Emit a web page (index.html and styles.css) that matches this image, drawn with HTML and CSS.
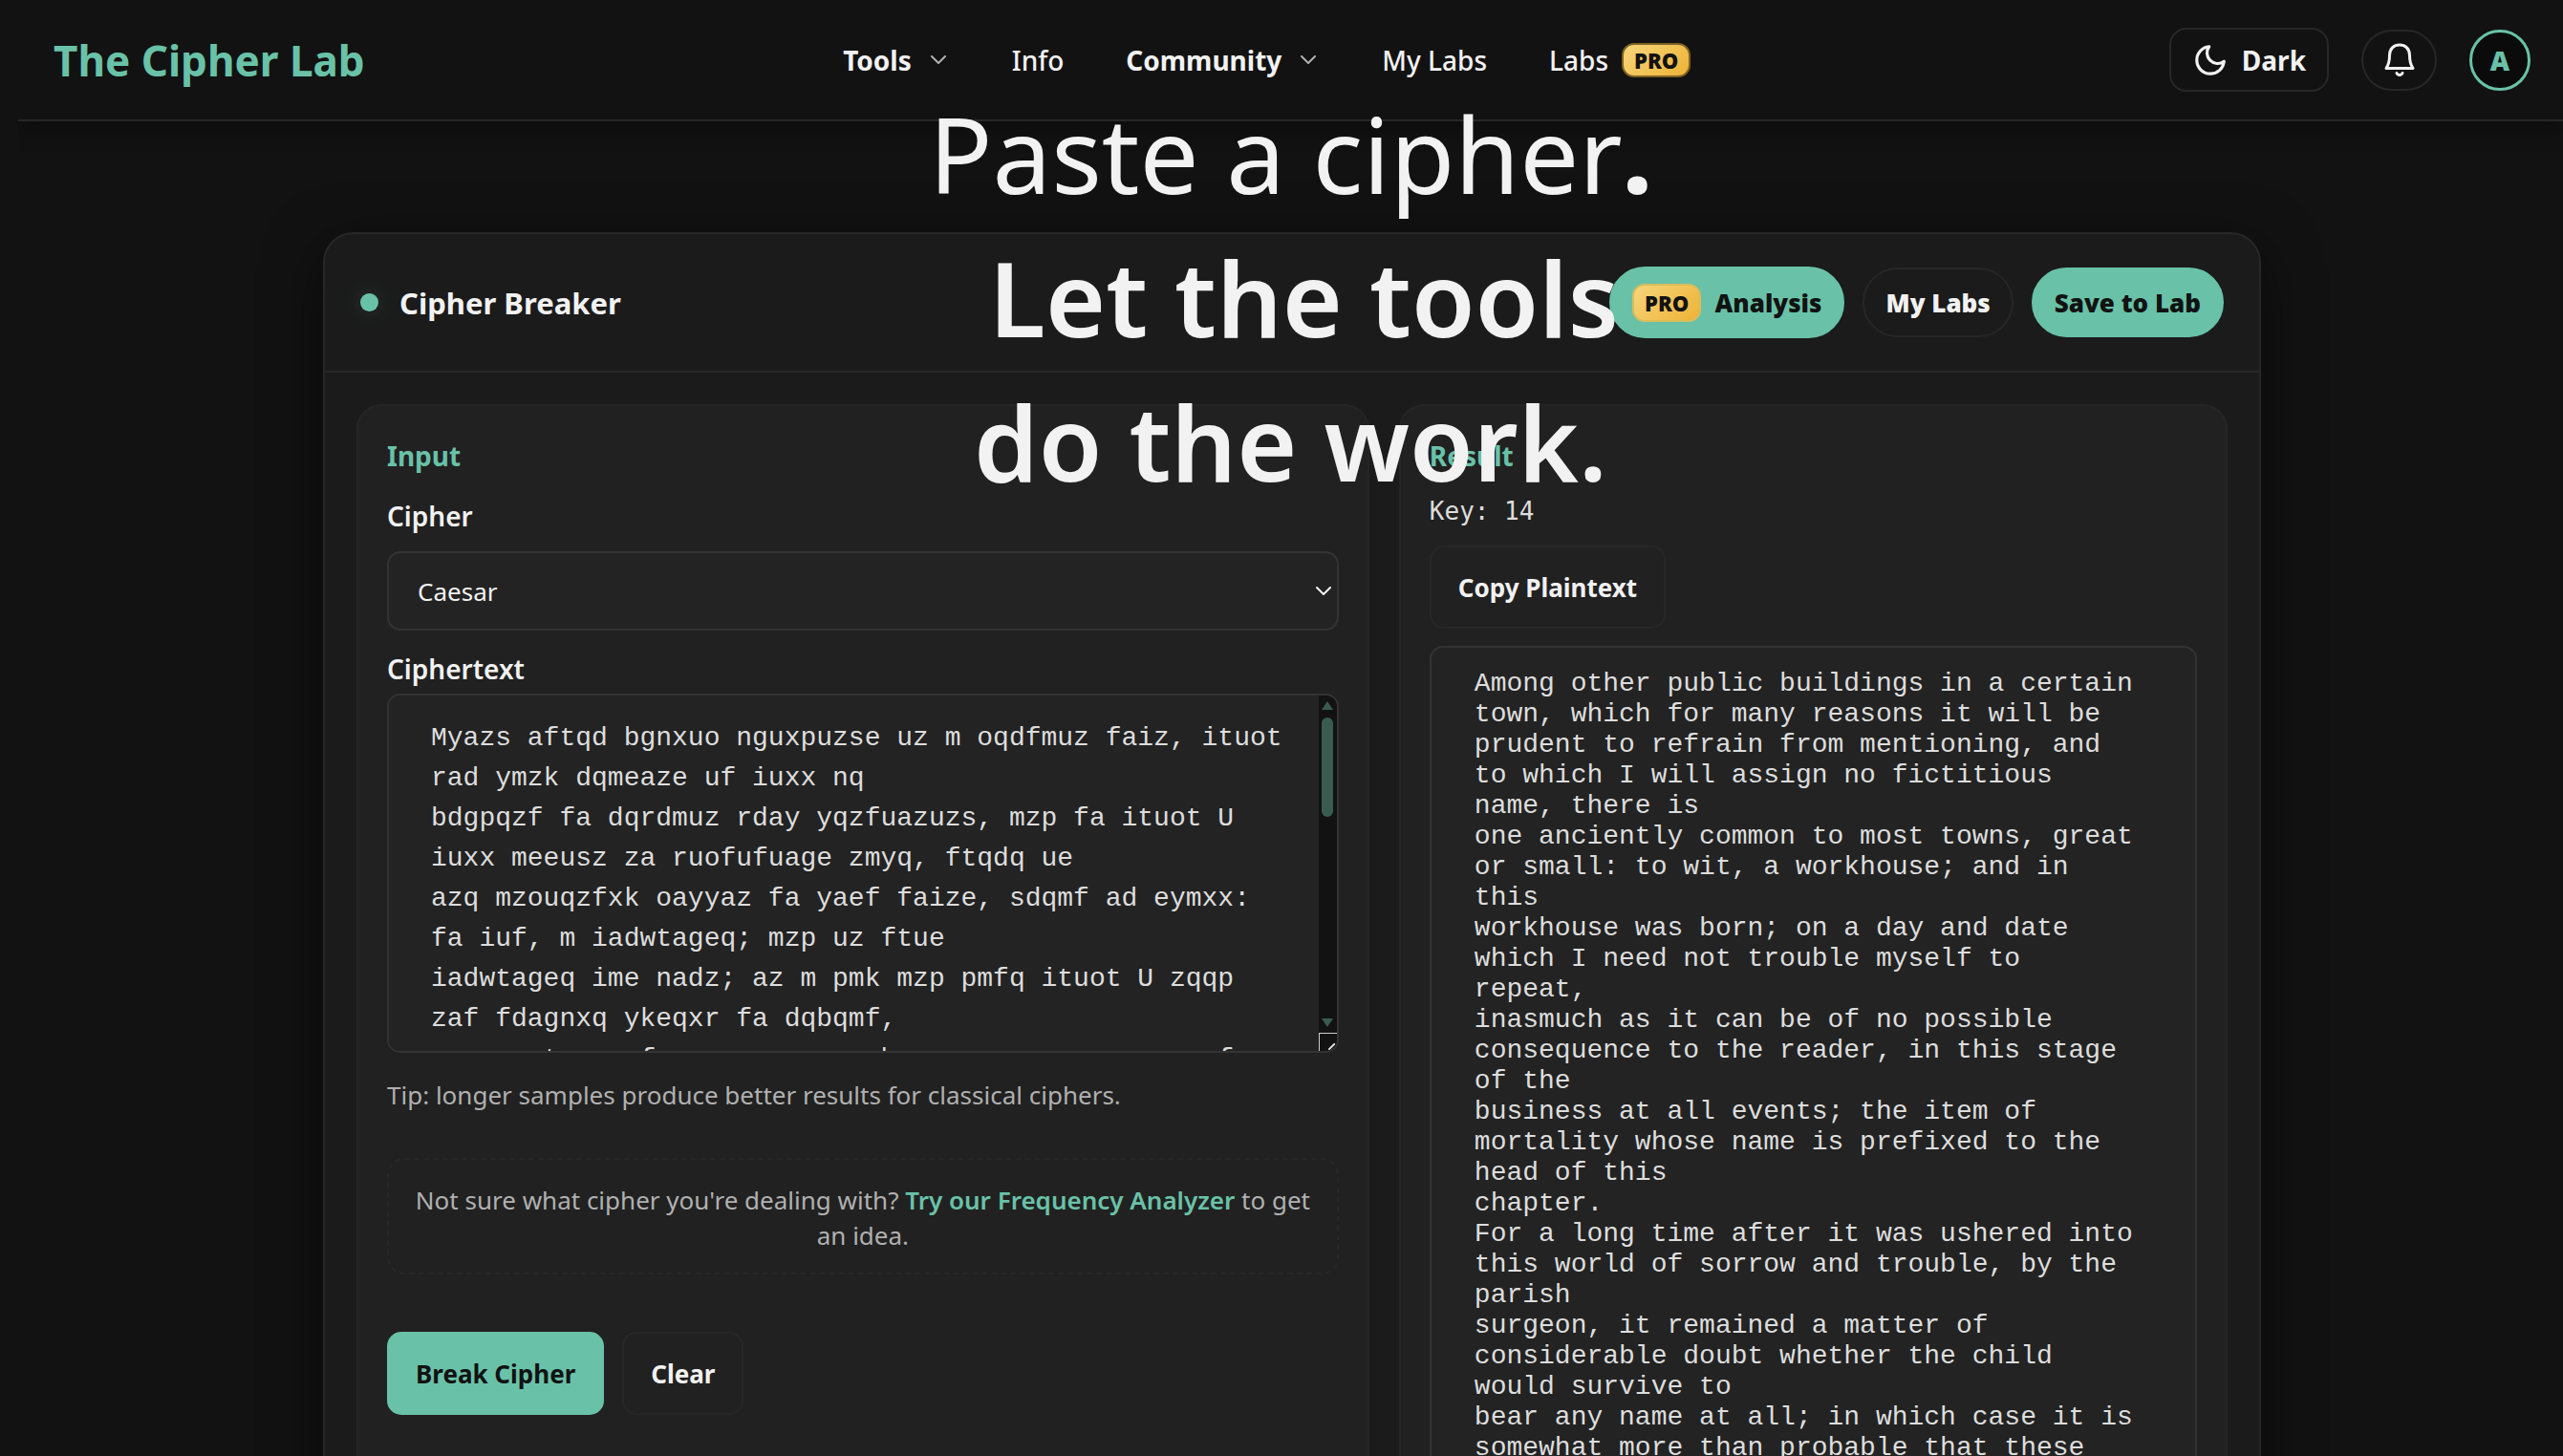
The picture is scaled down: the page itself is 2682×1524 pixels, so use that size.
FILE: index.html
```html
<!DOCTYPE html>
<html lang="en">
<head>
    <meta charset="UTF-8">
    <meta name="viewport" content="width=device-width, initial-scale=1.0">
    <title>The Cipher Lab</title>
    <link rel="stylesheet" href="styles.css">
</head>
<body>
    <header class="site-header">
        <a class="logo" href="#">The Cipher Lab</a>

        <nav class="nav">
            <button class="nav-item nav-menu" type="button">Tools
                <svg class="chevron" viewBox="0 0 16 10"><path d="M1 1l7 7 7-7"/></svg>
            </button>
            <a class="nav-item" href="#">Info</a>
            <button class="nav-item nav-menu" type="button">Community
                <svg class="chevron" viewBox="0 0 16 10"><path d="M1 1l7 7 7-7"/></svg>
            </button>
            <a class="nav-item" href="#">My Labs</a>
            <a class="nav-item" href="#">Labs <span class="pro">PRO</span></a>
        </nav>

        <div class="account">
            <button class="theme-btn" type="button">
                <svg class="moon" viewBox="0 0 24 24"><path d="M21 12.8A9 9 0 1 1 11.2 3a7 7 0 0 0 9.8 9.8z"/></svg>
                Dark
            </button>
            <button class="bell-btn" type="button" aria-label="Notifications">
                <svg class="bell" viewBox="0 0 32 36"><path d="M2 26.500C5 22 5.500 18 5.500 13C5.500 6 10 2 16 2C22 2 26.500 6 26.500 13C26.500 18 27 22 30 26.500Z"/><path d="M13 31.500C14 34 18 34 19 31.500"/></svg>
            </button>
            <button class="avatar" type="button">A</button>
        </div>
    </header>

    <main class="panel">
        <div class="panel-header">
            <span class="dot"></span>
            <h1>Cipher Breaker</h1>
            <div class="panel-actions">
                <button class="pill pill-primary pill-pro" type="button"><span class="pro">PRO</span>Analysis</button>
                <button class="pill" type="button">My Labs</button>
                <button class="pill pill-primary" type="button">Save to Lab</button>
            </div>
        </div>

        <div class="panel-body">
            <!-- Input -->
            <section class="card">
                <h2>Input</h2>
                <label for="cipher">Cipher</label>
                <div class="select-wrap">
                    <select id="cipher">
                        <option>Caesar</option>
                    </select>
                    <svg class="select-arrow" viewBox="0 0 16 10"><path d="M1 1l7 7 7-7"/></svg>
                </div>

                <label for="ciphertext">Ciphertext</label>
                <div class="textarea-wrap">
                    <textarea id="ciphertext" spellcheck="false">Myazs aftqd bgnxuo nguxpuzse uz m oqdfmuz faiz, ituot rad ymzk dqmeaze uf iuxx nq
bdgpqzf fa dqrdmuz rday yqzfuazuzs, mzp fa ituot U iuxx meeusz za ruofufuage zmyq, ftqdq ue
azq mzouqzfxk oayyaz fa yaef faize, sdqmf ad eymxx: fa iuf, m iadwtageq; mzp uz ftue
iadwtageq ime nadz; az m pmk mzp pmfq ituot U zqqp zaf fdagnxq ykeqxr fa dqbqmf,
uzmeygot me uf omz nq ar za baeeunxq oazeqcgqzoq fa ftq dqmpqd, uz ftue efmsq ar ftq</textarea>
                    <div class="scrollbar">
                        <svg class="scroll-arrow" viewBox="0 0 12 9"><path d="M6 0L12 9H0z"/></svg>
                        <div class="scroll-thumb"></div>
                        <svg class="scroll-arrow scroll-down" viewBox="0 0 12 9"><path d="M0 0h12L6 9z"/></svg>
                        <svg class="grip" viewBox="0 0 20 20"><path d="M11 18l6-6M16 18l1-1"/></svg>
                    </div>
                </div>

                <p class="tip">Tip: longer samples produce better results for classical ciphers.</p>
                <p class="hint">Not sure what cipher you're dealing with? <a href="#">Try our Frequency Analyzer</a> to get an idea.</p>

                <div class="actions">
                    <button class="btn btn-primary" type="button">Break Cipher</button>
                    <button class="btn" type="button">Clear</button>
                </div>
            </section>

            <!-- Result -->
            <section class="card">
                <h2>Result</h2>
                <p class="key">Key: 14</p>
                <button class="btn" type="button">Copy Plaintext</button>
                <pre class="output">Among other public buildings in a certain town, which for many reasons it will be prudent to refrain from mentioning, and to which I will assign no fictitious name, there is
one anciently common to most towns, great or small: to wit, a workhouse; and in this
workhouse was born; on a day and date which I need not trouble myself to repeat,
inasmuch as it can be of no possible consequence to the reader, in this stage of the
business at all events; the item of mortality whose name is prefixed to the head of this
chapter.
For a long time after it was ushered into this world of sorrow and trouble, by the parish
surgeon, it remained a matter of considerable doubt whether the child would survive to
bear any name at all; in which case it is somewhat more than probable that these memoirs
would never have appeared</pre>
            </section>
        </div>
    </main>

    <div class="headline">
        <p>Paste a cipher<strong>.</strong></p>
        <p><strong>&nbsp;Let the tools</strong></p>
        <p><strong>do the work.</strong></p>
    </div>
</body>
</html>
```
FILE: styles.css
```css
* {
    margin: 0;
    padding: 0;
    box-sizing: border-box;
}

:root {
    --bg: #121212;
    --panel: #1b1b1b;
    --card: #212121;
    --field: #232323;
    --line: #272727;
    --field-line: #333333;
    --text: #f2f2f2;
    --muted: #b0b0b0;
    --accent: #69c2a8;
}

body {
    position: relative;
    height: 100vh;
    overflow: hidden;
    padding-left: 19px;
    background-color: var(--bg);
    color: var(--text);
    font-family: "Noto Sans", "Open Sans", sans-serif;
    font-size: 26px;
    line-height: 36px;
}

button,
select,
textarea {
    font: inherit;
    color: inherit;
    background: none;
    border: none;
    outline: none;
}

button {
    cursor: pointer;
}

a {
    color: inherit;
    text-decoration: none;
}

svg {
    fill: none;
    stroke: currentColor;
    stroke-width: 2;
    stroke-linecap: round;
    stroke-linejoin: round;
}

/* Header */
.site-header {
    display: flex;
    align-items: center;
    justify-content: space-between;
    height: 127px;
    padding: 0 34px 0 37px;
    border-bottom: 2px solid var(--line);
    box-shadow: 0 8px 20px rgba(0, 0, 0, 0.35);
    clip-path: inset(0 0 -40px 0);
}

.logo {
    color: var(--accent);
    font-size: 44px;
    font-weight: 700;
}

.nav {
    display: flex;
    align-items: center;
    gap: 65px;
}

.nav-item {
    display: flex;
    align-items: center;
    font-size: 28px;
    font-weight: 500;
}

.nav-menu {
    gap: 20px;
    font-weight: 700;
    padding-right: 4px;
}

.nav-item .pro {
    margin-left: 14px;
}

.chevron {
    width: 16px;
    height: 10px;
    color: var(--muted);
}

.pro {
    display: flex;
    align-items: center;
    height: 36px;
    padding: 0 11px;
    border: 2px solid #7d6224;
    border-radius: 13px;
    background: linear-gradient(135deg, #f6d57c, #eeb335);
    color: #121212;
    font-size: 22px;
    font-weight: 900;
}

.account {
    display: flex;
    align-items: center;
    gap: 34px;
}

.theme-btn {
    display: flex;
    align-items: center;
    gap: 14px;
    height: 67px;
    padding: 0 22px;
    border: 2px solid var(--line);
    border-radius: 18px;
    font-size: 28px;
    font-weight: 700;
}

.moon {
    width: 38px;
    height: 38px;
}

.bell-btn {
    display: flex;
    align-items: center;
    justify-content: center;
    width: 79px;
    height: 64px;
    border: 2px solid var(--line);
    border-radius: 32px;
}

.bell {
    width: 32px;
    height: 36px;
    stroke-width: 3;
}

.avatar {
    width: 64px;
    height: 64px;
    border: 3px solid var(--accent);
    border-radius: 50%;
    background-color: #0b0b0b;
    color: var(--accent);
    font-size: 28px;
    font-weight: 900;
}

/* Panel */
.panel {
    margin: 116px 316px 0 319px;
    border: 2px solid var(--line);
    border-radius: 32px;
    background-color: var(--panel);
    box-shadow: 0 16px 60px rgba(0, 0, 0, 0.5);
}

.panel-header {
    display: flex;
    align-items: center;
    padding: 34px 37px;
    border-bottom: 2px solid var(--line);
}

.dot {
    width: 19px;
    height: 19px;
    border-radius: 50%;
    background-color: var(--accent);
    box-shadow: 0 0 20px rgba(105, 194, 168, 0.2);
}

h1 {
    margin-left: 22px;
    font-size: 31px;
    font-weight: 700;
}

.panel-actions {
    display: flex;
    align-items: center;
    gap: 19px;
    margin-left: auto;
}

.pill {
    display: flex;
    align-items: center;
    height: 73px;
    padding: 0 22px;
    border: 2px solid var(--line);
    border-radius: 38px;
    font-weight: 900;
}

.pill-primary {
    border-color: var(--accent);
    background-color: var(--accent);
    color: #121212;
}

.pill-pro {
    gap: 14px;
    height: 75px;
}

.pill .pro {
    height: 40px;
    border-color: #d9bd5c;
}

.panel-body {
    display: grid;
    grid-template-columns: 11fr 9fr;
    gap: 31px;
    padding: 33px;
}

.card {
    min-width: 0;
    padding: 34px 30px;
    border: 2px solid #252525;
    border-radius: 26px;
    background-color: var(--card);
}

h2 {
    color: var(--accent);
    font-size: 28px;
    line-height: 36px;
    font-weight: 700;
}

label {
    display: block;
    font-size: 28px;
    font-weight: 600;
}

h2 + label {
    margin-top: 27px;
}

.select-wrap {
    position: relative;
    margin: 19px 0 22px;
}

select {
    display: block;
    width: 100%;
    height: 83px;
    padding: 0 30px;
    appearance: none;
    border: 2px solid var(--field-line);
    border-radius: 14px;
    background-color: var(--field);
}

.select-arrow {
    position: absolute;
    right: 8px;
    top: 37px;
    width: 16px;
    height: 10px;
}

.textarea-wrap {
    position: relative;
    margin-top: 8px;
}

textarea {
    display: block;
    width: 100%;
    height: 376px;
    padding: 24px 48px 0 44px;
    resize: none;
    scrollbar-width: none;
    border: 2px solid var(--field-line);
    border-radius: 14px;
    background-color: var(--field);
    color: #dddddd;
    font-family: "Liberation Mono", monospace;
    font-size: 28px;
    line-height: 42px;
}

/* Custom scrollbar over the right edge of the textarea */
.scrollbar {
    position: absolute;
    top: 2px;
    right: 2px;
    bottom: 2px;
    display: flex;
    flex-direction: column;
    align-items: center;
    width: 19px;
    padding-top: 6px;
    border-radius: 0 12px 12px 0;
    overflow: hidden;
    background-color: var(--bg);
}

.scroll-arrow {
    width: 12px;
    height: 9px;
    fill: #3a5b4f;
    stroke: none;
}

.scroll-thumb {
    width: 12px;
    height: 104px;
    margin-top: 8px;
    border-radius: 6px;
    background-color: #3a5b4f;
}

.scroll-down {
    margin-top: auto;
}

.grip {
    width: 19px;
    height: 19px;
    margin-top: 6px;
    border-top: 1px solid #cccccc;
    border-left: 1px solid #cccccc;
}

.tip {
    margin-top: 26px;
    color: var(--muted);
}

.hint {
    margin-top: 48px;
    padding: 24px 20px 20px;
    border: 2px dashed var(--line);
    border-radius: 18px;
    color: var(--muted);
    line-height: 37px;
    text-align: center;
}

.hint a {
    color: var(--accent);
    font-weight: 600;
}

.actions {
    display: flex;
    gap: 19px;
    margin-top: 60px;
}

.btn {
    height: 87px;
    padding: 0 28px;
    border: 2px solid var(--line);
    border-radius: 15px;
    font-weight: 700;
}

.btn-primary {
    border-color: var(--accent);
    background-color: var(--accent);
    color: #121212;
}

.key {
    margin: 22px 0 18px;
    color: #dddddd;
    font-family: "DejaVu Sans Mono", monospace;
}

.output {
    margin-top: 18px;
    padding: 22px 56px 22px 45px;
    border: 2px solid var(--field-line);
    border-radius: 14px;
    background-color: var(--field);
    color: #dddddd;
    font-family: "Liberation Mono", monospace;
    font-size: 28px;
    line-height: 32px;
    white-space: pre-wrap;
}

/* Headline laid over the app */
.headline {
    position: absolute;
    top: 85px;
    left: 19px;
    right: 0;
    font-size: 108px;
    line-height: 151px;
    text-align: center;
    pointer-events: none;
}

.headline p:first-child {
    font-size: 110px;
}

.headline strong {
    font-weight: 600;
}

.headline p:first-child strong {
    font-weight: 800;
}
```
